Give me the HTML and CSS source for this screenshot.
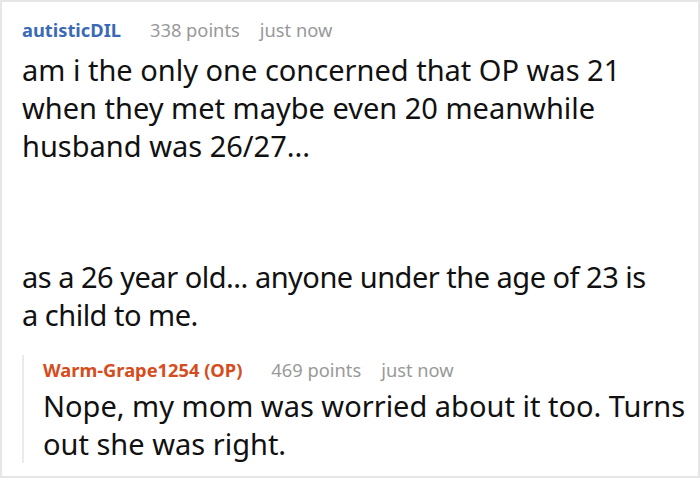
FILE: index.html
```html
<!DOCTYPE html>
<html>
<head>
<meta charset="utf-8">
<link rel="stylesheet" href="styles.css">
</head>
<body>
<div class="frame">
  <div class="comment">
    <div class="meta">
      <span class="user">autisticDIL</span>
      <span class="info">338 points</span>
      <span class="info">just now</span>
    </div>
    <p class="body">am i the only one concerned that OP was 21 when they met maybe even 20 meanwhile husband was 26/27...</p>
    <p class="body second">as a 26 year old... anyone under the age of 23 is<br>a child to me.</p>
    <div class="reply">
      <div class="meta">
        <span class="user op">Warm-Grape1254 (OP)</span>
        <span class="info">469 points</span>
        <span class="info">just now</span>
      </div>
      <p class="body">Nope, my mom was worried about it too. Turns out she was right.</p>
    </div>
  </div>
</div>
</body>
</html>
```
FILE: styles.css
```css
html, body {
  margin: 0;
  padding: 0;
  background: #fff;
}
.frame {
  width: 700px;
  height: 478px;
  box-sizing: border-box;
  border: 2px solid #e6e6e6;
  overflow: hidden;
  font-family: "Noto Sans", "Open Sans", sans-serif;
  color: #111;
}
.comment {
  padding: 14px 20px 0 20px;
}
.meta {
  display: flex;
  gap: 20px;
  font-size: 18.3px;
  line-height: 28px;
}
.user {
  color: #3a6ab5;
  font-weight: 700;
  margin-right: 9px;
}
.user.op {
  color: #d64d1d;
}
.info {
  color: #999;
}
.body {
  margin: 0;
  font-size: 29px;
  line-height: 38px;
}
.comment > .body:first-of-type {
  margin-top: 7px;
}
.second {
  margin-top: 93px;
  letter-spacing: -0.5px;
}
.reply {
  margin-top: 21px;
  margin-right: -16px;
  border-left: 2px solid #ebebeb;
  padding-left: 19px;
  padding-top: 1px;
}
.reply .body {
  margin-top: 3px;
}
```
